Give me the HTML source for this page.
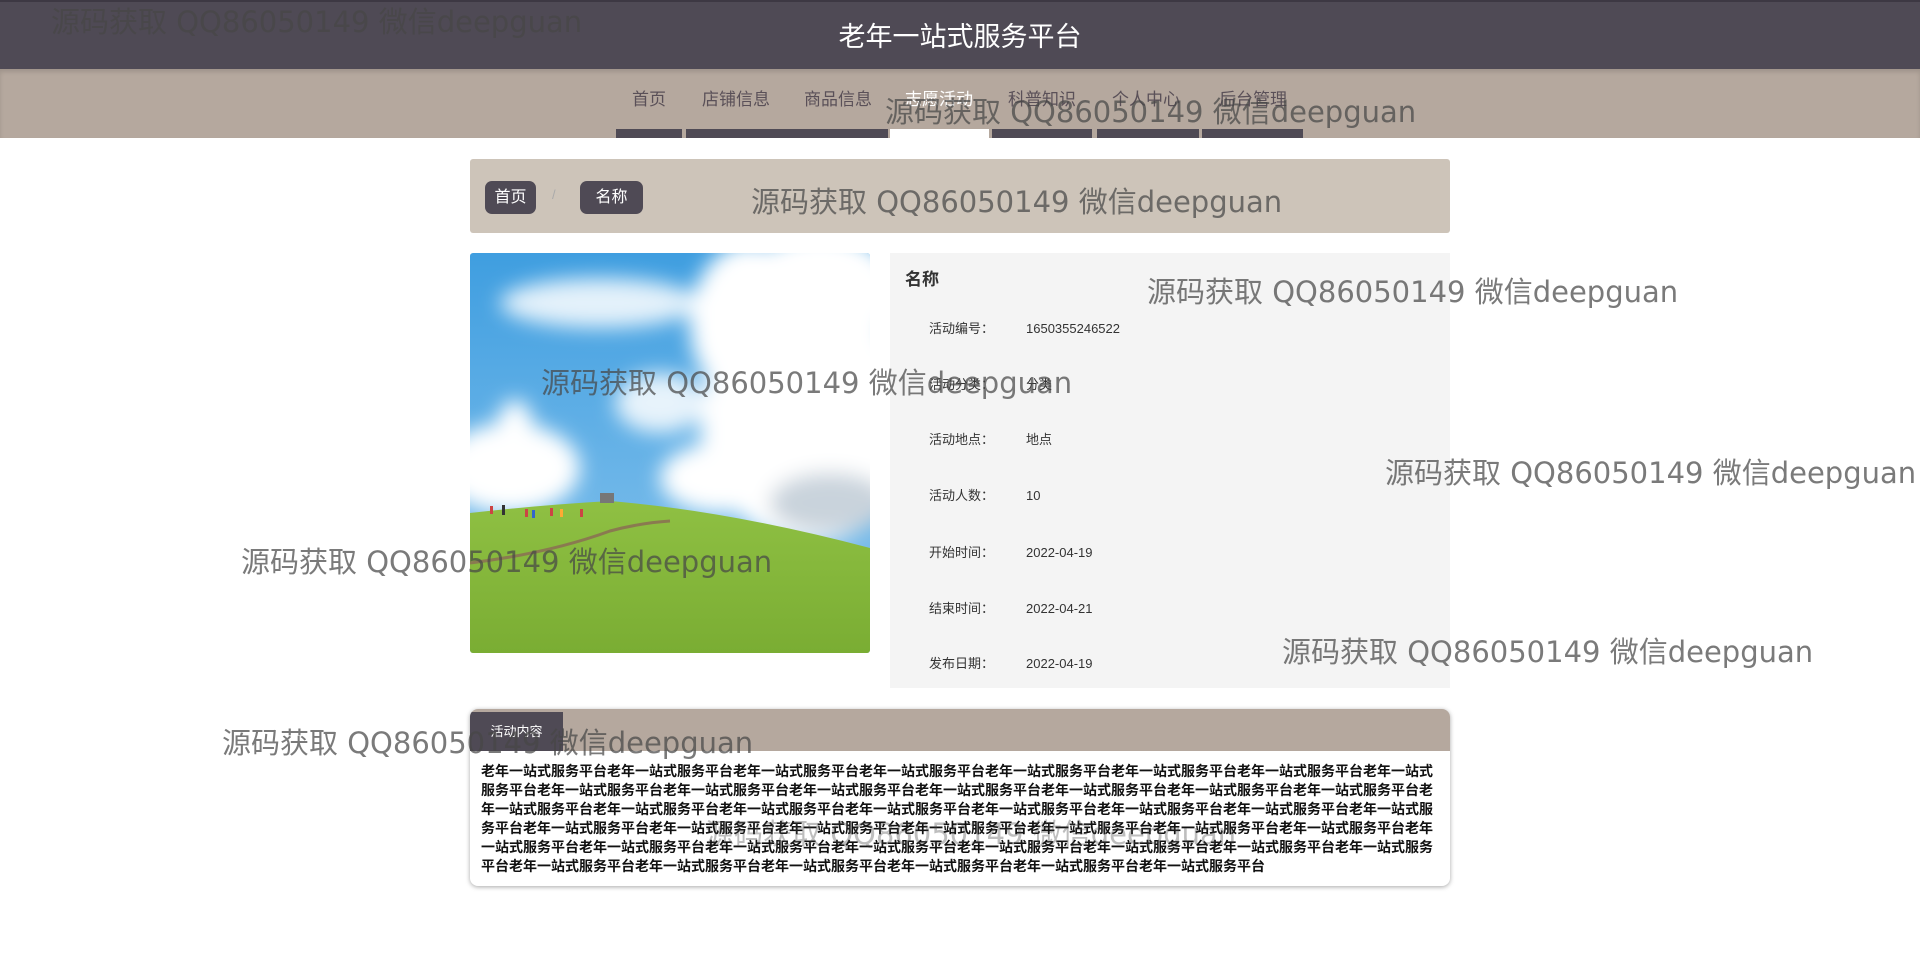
<!DOCTYPE html>
<html><head><meta charset="utf-8">
<style>
*{margin:0;padding:0;box-sizing:border-box}
body{width:1920px;height:972px;overflow:hidden;background:#fff;font-family:"Liberation Sans","Noto Sans CJK SC",sans-serif;position:relative}
.hd{position:absolute;left:0;top:0;width:1920px;height:69px;background:#4f4a55;border-top:2px solid #3d3843}
.hd h1{position:absolute;left:0;width:1920px;top:13px;text-align:center;color:#fff;font-size:27px;font-weight:normal}
.nav{position:absolute;left:0;top:69px;width:1920px;height:69px;background:#b5a89e;box-shadow:inset 0 3px 4px rgba(0,0,0,.12)}
.nav span{position:absolute;top:16px;font-size:17px;color:#5a5058;transform:translateX(-50%)}
.tab{position:absolute;top:60px;height:9px;background:#4f4a55}
.bc{position:absolute;left:470px;top:159px;width:980px;height:74px;background:#cdc4b9;border-radius:3px}
.btn{position:absolute;top:22px;height:33px;background:#4f4a55;color:#fff;border-radius:7px;font-size:16px;line-height:33px;text-align:center}
.img{position:absolute;left:470px;top:253px;width:400px;height:400px;overflow:hidden;border-radius:3px}
.info{position:absolute;left:890px;top:253px;width:560px;height:435px;background:#f4f4f4}
.info h3{position:absolute;left:15px;top:12px;font-size:17px;color:#333}
.row{position:absolute;left:39px;font-size:13px;color:#333}
.row b{font-weight:normal;display:inline-block;width:97px}
.card{position:absolute;left:470px;top:709px;width:980px;height:177px;border-radius:8px;box-shadow:0 1px 5px rgba(0,0,0,.35);overflow:hidden;background:#fff}
.card .top{height:42px;background:#b5a89e}
.card .t{position:absolute;left:0;top:3px;width:93px;height:39px;background:#4f4a55;color:#fff;font-size:13px;line-height:39px;text-align:center}
.card p{position:absolute;left:11px;top:53px;width:956px;font-size:14px;line-height:19px;font-weight:bold;color:#111;word-break:break-all}
.wm{position:absolute;font-size:29px;color:rgba(70,70,70,.72);white-space:nowrap;font-family:"DejaVu Sans","Noto Sans CJK SC",sans-serif}
</style></head><body>
<div class="hd"><h1>老年一站式服务平台</h1></div>
<div class="nav">
<span style="left:649px">首页</span><span style="left:736px">店铺信息</span><span style="left:838px">商品信息</span><span style="left:939px;color:#fff">志愿活动</span><span style="left:1042px">科普知识</span><span style="left:1146px">个人中心</span><span style="left:1253px">后台管理</span>
<div class="tab" style="left:616px;width:66px"></div>
<div class="tab" style="left:686px;width:202px"></div>
<div class="tab" style="left:890px;width:99px;background:#fff"></div>
<div class="tab" style="left:992px;width:100px"></div>
<div class="tab" style="left:1097px;width:102px"></div>
<div class="tab" style="left:1202px;width:101px"></div>
</div>
<div class="bc">
<div class="btn" style="left:15px;width:51px">首页</div>
<span style="position:absolute;left:82px;top:28px;color:#aaa;font-size:13px">/</span>
<div class="btn" style="left:110px;width:63px">名称</div>
</div>
<div class="img"><svg width="400" height="400" viewBox="0 0 400 400">
<defs><linearGradient id="s" x1="0" y1="0" x2="0" y2="1"><stop offset="0" stop-color="#3f9ee0"/><stop offset="1" stop-color="#8cc6ee"/></linearGradient>
<linearGradient id="g" x1="0" y1="0" x2="0" y2="1"><stop offset="0" stop-color="#8fc043"/><stop offset="1" stop-color="#7aad33"/></linearGradient>
<filter id="b"><feGaussianBlur stdDeviation="10"/></filter></defs>
<rect width="400" height="400" fill="url(#s)"/>
<g filter="url(#b)" fill="#fff">
<ellipse cx="340" cy="170" rx="110" ry="120"/><ellipse cx="280" cy="70" rx="60" ry="80"/><ellipse cx="350" cy="40" rx="80" ry="60"/>
<ellipse cx="40" cy="215" rx="70" ry="45"/><ellipse cx="45" cy="175" rx="18" ry="28"/><ellipse cx="130" cy="50" rx="100" ry="25" opacity=".85"/><ellipse cx="190" cy="150" rx="45" ry="30" opacity=".85"/>
<ellipse cx="250" cy="225" rx="60" ry="35"/><ellipse cx="360" cy="250" rx="60" ry="30" fill="#c9d3dc"/>
</g>
<path d="M0 260 Q70 252 140 248 Q260 258 400 295 L400 400 L0 400Z" fill="url(#g)"/>
<path d="M0 310 Q80 300 140 278 Q170 270 200 268" stroke="#8a7a50" stroke-width="3" fill="none"/>
<rect x="130" y="240" width="14" height="10" fill="#777"/>
<g fill="#c44"><rect x="20" y="253" width="3" height="8"/><rect x="55" y="256" width="3" height="8"/><rect x="80" y="255" width="3" height="8"/><rect x="110" y="256" width="3" height="8"/><rect x="32" y="252" width="3" height="10" fill="#333"/><rect x="62" y="257" width="3" height="8" fill="#36c"/><rect x="90" y="256" width="3" height="8" fill="#fa3"/></g>
</svg></div>
<div class="info"><h3>名称</h3>
<div class="row" style="top:65px"><b>活动编号：</b>1650355246522</div>
<div class="row" style="top:121px"><b>活动分类：</b>分类</div>
<div class="row" style="top:176px"><b>活动地点：</b>地点</div>
<div class="row" style="top:232px"><b>活动人数：</b>10</div>
<div class="row" style="top:289px"><b>开始时间：</b>2022-04-19</div>
<div class="row" style="top:345px"><b>结束时间：</b>2022-04-21</div>
<div class="row" style="top:400px"><b>发布日期：</b>2022-04-19</div>
</div>
<div class="card"><div class="top"></div><div class="t">活动内容</div>
<p>老年一站式服务平台老年一站式服务平台老年一站式服务平台老年一站式服务平台老年一站式服务平台老年一站式服务平台老年一站式服务平台老年一站式服务平台老年一站式服务平台老年一站式服务平台老年一站式服务平台老年一站式服务平台老年一站式服务平台老年一站式服务平台老年一站式服务平台老年一站式服务平台老年一站式服务平台老年一站式服务平台老年一站式服务平台老年一站式服务平台老年一站式服务平台老年一站式服务平台老年一站式服务平台老年一站式服务平台老年一站式服务平台老年一站式服务平台老年一站式服务平台老年一站式服务平台老年一站式服务平台老年一站式服务平台老年一站式服务平台老年一站式服务平台老年一站式服务平台老年一站式服务平台老年一站式服务平台老年一站式服务平台老年一站式服务平台老年一站式服务平台老年一站式服务平台老年一站式服务平台老年一站式服务平台老年一站式服务平台老年一站式服务平台老年一站式服务平台</p></div>
<div class="wm" style="left:51px;top:-1px">源码获取 QQ86050149 微信deepguan</div>
<div class="wm" style="left:885px;top:89px">源码获取 QQ86050149 微信deepguan</div>
<div class="wm" style="left:751px;top:179px">源码获取 QQ86050149 微信deepguan</div>
<div class="wm" style="left:1147px;top:269px">源码获取 QQ86050149 微信deepguan</div>
<div class="wm" style="left:541px;top:360px">源码获取 QQ86050149 微信deepguan</div>
<div class="wm" style="left:1385px;top:450px">源码获取 QQ86050149 微信deepguan</div>
<div class="wm" style="left:241px;top:539px">源码获取 QQ86050149 微信deepguan</div>
<div class="wm" style="left:1282px;top:629px">源码获取 QQ86050149 微信deepguan</div>
<div class="wm" style="left:222px;top:720px">源码获取 QQ86050149 微信deepguan</div>
<div class="wm" style="left:705px;top:811px;color:rgba(70,70,70,.35)">源码获取 QQ86050149 微信deepguan</div>
</body></html>
